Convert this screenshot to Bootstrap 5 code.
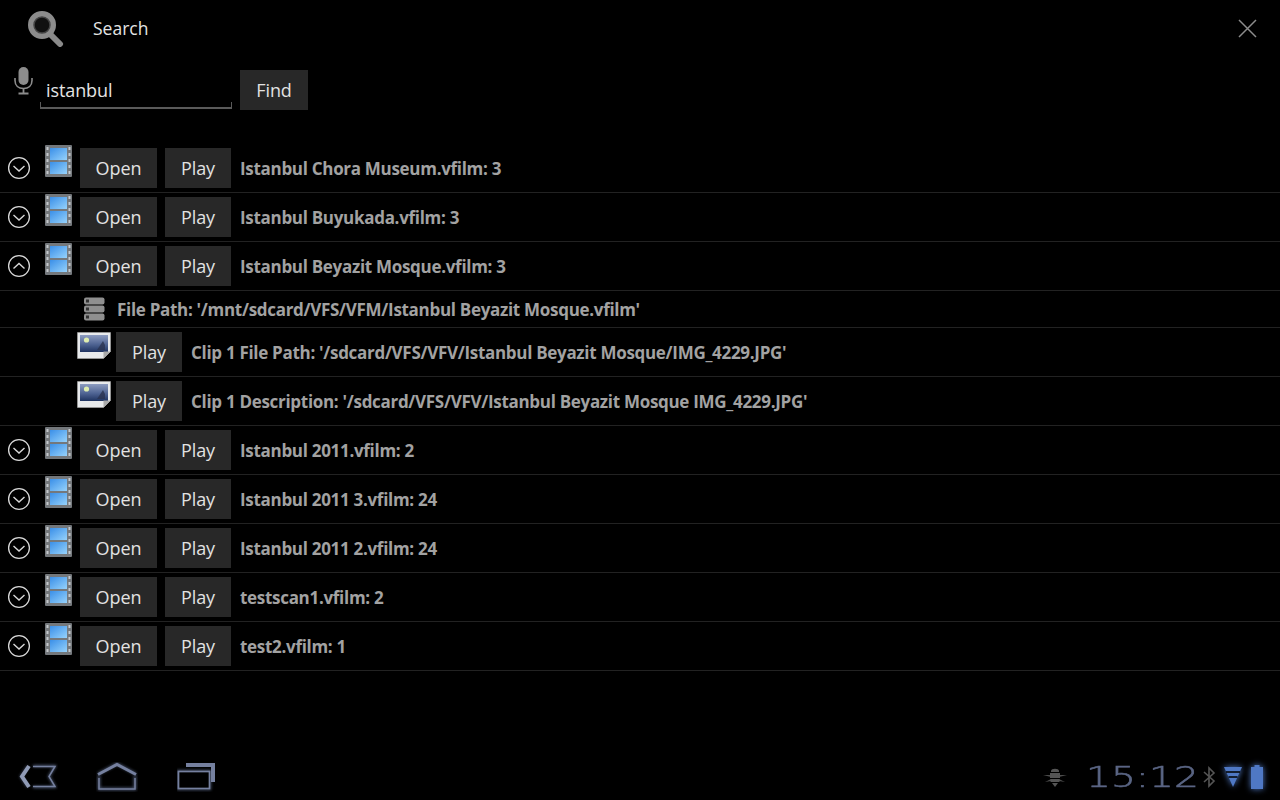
<!DOCTYPE html>
<html lang="en">
<head>
    <meta charset="UTF-8">
    <meta name="viewport" content="width=device-width, initial-scale=1.0">
    <title>Search</title>
    <link href="https://cdn.jsdelivr.net/npm/bootstrap@5.3.0/dist/css/bootstrap.min.css" rel="stylesheet">
    <style>
        html, body { height: 100%; }
        body {
            background: #000;
            color: #a2a2a2;
            font-family: "Open Sans", "Noto Sans", sans-serif;
            overflow: hidden;
        }
        .page-wrap { height: 800px; }
        .top-bar { height: 56px; padding: 0 23px 0 27px; }
        .top-title { color: #e4e4e4; font-size: 17.500px; margin-left: 28px; }
        .search-row { height: 88px; padding: 14px 0 0 14px; }
        .mic-icon { margin-top: -3px; }
        .query-box {
            width: 192px; height: 39px; margin-left: 7px; padding: 2px 5px 0;
            color: #e4e4e4; font-size: 18px; line-height: 37px; letter-spacing: -.1px;
            border: 2px solid #555; border-width: 0 1px 2px; border-image: linear-gradient(to bottom, #000 0 85%, #5a5a5a 85%) 1;
        }
        .dark-btn {
            background: #282828; color: #e2e2e2; border: 0; border-radius: 0;
            height: 40px; padding: 0; font-size: 18px; line-height: 40px; text-align: center; letter-spacing: -.1px;
        }
        .find-btn { width: 68px; margin-left: 8px; }
        .open-btn { width: 77px; }
        .play-btn { width: 66px; }
        .result-row { height: 49px; border-bottom: 1px solid #222; padding-top: 4px; }
        .result-row.path-row { height: 37px; padding-top: 0; }
        .toggle-icon { margin: 8px 0 0 7px; }
        .film-icon { margin: -3px 8px 0 14px; }
        .clip-icon { margin: 0 5px 0 77px; }
        .db-icon { margin-left: 83px; }
        .row-text { font-weight: 700; font-size: 17px; letter-spacing: -.3px; line-height: 42px; margin-left: 9px; white-space: nowrap; }
        .path-row .row-text { line-height: 38px; margin-left: 12px; padding-top: 2px; }
        .sys-bar { height: 50px; margin-top: auto; padding-top: 4px; }
        .clock-text {
            color: #5a6584; font-family: "DejaVu Sans", sans-serif; font-weight: 200;
            font-size: 29px; line-height: 44px; width: 108px; white-space: nowrap;
            -webkit-text-stroke: .6px #5a6584;
            transform: scaleX(1.35); transform-origin: left center;
        }
        .glow-icon { filter: drop-shadow(0 0 3px #4f78c4); }
    </style>
</head>
<body>
    <svg width="0" height="0" class="d-block position-absolute">
        <defs>
            <linearGradient id="frameBlue" x1="0" y1="0" x2="1" y2="1">
                <stop offset="0" stop-color="#3a8fe8"/><stop offset="1" stop-color="#96d2fb"/>
            </linearGradient>
            <linearGradient id="picSky" x1="0" y1="0" x2="0" y2="1">
                <stop offset="0" stop-color="#8d9cc0"/><stop offset=".55" stop-color="#4f6493"/><stop offset="1" stop-color="#1f3360"/>
            </linearGradient>
            <filter id="softGlow" x="-30%" y="-30%" width="160%" height="160%">
                <feGaussianBlur stdDeviation="1.600"/>
            </filter>
            <symbol id="film" viewBox="0 0 27 32">
                <rect width="27" height="32" rx="1" fill="#74787c"/>
                <rect x="5" y="3" width="17" height="12" fill="url(#frameBlue)"/>
                <rect x="5" y="17" width="17" height="12" fill="url(#frameBlue)"/>
                <g fill="#c4c8cc">
                    <rect x="1.500" y="2" width="2" height="3"/><rect x="1.500" y="8" width="2" height="3"/><rect x="1.500" y="14" width="2" height="3"/><rect x="1.500" y="20" width="2" height="3"/><rect x="1.500" y="26" width="2" height="3"/>
                    <rect x="23.500" y="2" width="2" height="3"/><rect x="23.500" y="8" width="2" height="3"/><rect x="23.500" y="14" width="2" height="3"/><rect x="23.500" y="20" width="2" height="3"/><rect x="23.500" y="26" width="2" height="3"/>
                </g>
            </symbol>
            <symbol id="chevDown" viewBox="0 0 24 24">
                <circle cx="12" cy="12" r="10.400" fill="none" stroke="#d8d8d8" stroke-width="1.300"/>
                <path d="M6.500 10l5.500 5 5.500-5" fill="none" stroke="#d8d8d8" stroke-width="1.400"/>
            </symbol>
            <symbol id="chevUp" viewBox="0 0 24 24">
                <circle cx="12" cy="12" r="10.400" fill="none" stroke="#d8d8d8" stroke-width="1.300"/>
                <path d="M6.500 14.500l5.500-5 5.500 5" fill="none" stroke="#d8d8d8" stroke-width="1.400"/>
            </symbol>
            <symbol id="clipPic" viewBox="0 0 34 27">
                <path d="M.5 .5h33v19l-7 7H.5z" fill="#e8eaec" stroke="#aaa" stroke-width=".6"/>
                <rect x="3" y="3" width="28" height="17" fill="url(#picSky)"/>
                <circle cx="9.500" cy="8" r="2.600" fill="#dfeeb0"/>
                <path d="M20 18l4-6 2-3 2 4v5z" fill="#2b3350" opacity=".8"/>
                <path d="M26.500 26.500l7-7h-7z" fill="#aaa"/>
            </symbol>
            <symbol id="dbStack" viewBox="0 0 22 24">
                <rect x="1" y="0.500" width="20.500" height="7" rx="2" fill="#8f8f8f"/>
                <rect x="1" y="8.500" width="20.500" height="7" rx="2" fill="#8f8f8f"/>
                <rect x="1" y="16.500" width="20.500" height="7" rx="2" fill="#8f8f8f"/>
                <rect x="3" y="2.500" width="3" height="3" fill="#333"/><rect x="3" y="10.500" width="3" height="3" fill="#333"/><rect x="3" y="18.500" width="3" height="3" fill="#333"/>
            </symbol>
        </defs>
    </svg>

    <div class="page-wrap d-flex flex-column">
        <div class="top-bar d-flex align-items-center">
            <svg width="38" height="37" viewBox="0 0 38 37">
                <path d="M23 24l10 10" stroke="#8a8a8a" stroke-width="6" stroke-linecap="round"/>
                <circle cx="15" cy="15" r="11" fill="#111" stroke="#8c8c8c" stroke-width="6"/>
                <circle cx="15" cy="15" r="8" fill="none" stroke="#444" stroke-width="1.500"/>
            </svg>
            <span class="top-title">Search</span>
            <svg class="ms-auto" width="19" height="19" viewBox="0 0 19 19">
                <path d="M1 1l17 17M18 1L1 18" stroke="#8c8c8c" stroke-width="1.500"/>
            </svg>
        </div>

        <div class="search-row d-flex align-items-start">
            <svg class="mic-icon" width="19" height="28" viewBox="0 0 19 28">
                <rect x="4.500" y="0" width="10" height="18" rx="5" fill="#8c8c8c"/>
                <path d="M1 11v2.500c0 5 3.500 8 8.500 8s8.500-3 8.500-8V11" fill="none" stroke="#8c8c8c" stroke-width="1.600"/>
                <path d="M9.500 21v5M4.500 26.500h10" stroke="#8c8c8c" stroke-width="1.800"/>
            </svg>
            <div class="query-box">istanbul</div>
            <button type="button" class="dark-btn find-btn">Find</button>
        </div>

        <div id="resultList"></div>

        <div class="sys-bar d-flex align-items-center">
            <svg class="ms-3" width="42" height="30" viewBox="0 0 42 30">
                <g fill="none" stroke="#6a7a9e" stroke-width="2" filter="url(#softGlow)" opacity=".8">
                    <path d="M17 4H39L33 14.500l6 10.500H17"/><path d="M12 4L5 14.500 12 25"/>
                </g>
                <path d="M17 4.500H39L33 14.500l6 10H17" fill="none" stroke="#75809f" stroke-width="1.500"/>
                <path d="M13 4L6 14.500 13 25" fill="none" stroke="#8f9ab5" stroke-width="4"/>
            </svg>
            <svg style="margin-left:38px" width="42" height="30" viewBox="0 0 42 30">
                <path d="M2 12L21 2l19 10M3 14v13h36V14" fill="none" stroke="#6a7a9e" stroke-width="2.500" filter="url(#softGlow)" opacity=".8"/>
                <path d="M2 12.500L21 2.500l19 10" fill="none" stroke="#75809f" stroke-width="3"/>
                <path d="M3 16v11h36V16" fill="none" stroke="#75809f" stroke-width="1.500"/>
            </svg>
            <svg style="margin-left:39px" width="40" height="30" viewBox="0 0 40 30">
                <g filter="url(#softGlow)" opacity=".8" fill="none" stroke="#6a7a9e" stroke-width="2"><rect x="1" y="9" width="32" height="18"/></g>
                <path d="M9 3h27v17" fill="none" stroke="#75809f" stroke-width="4"/>
                <rect x="1.500" y="9.500" width="31" height="17" fill="#000" stroke="#75809f" stroke-width="1.700"/>
            </svg>
            <div class="ms-auto d-flex align-items-center gap-2 pe-3">
                <svg width="24" height="22" viewBox="0 0 24 22">
                    <path d="M0 9l8 2v-2zM24 9l-8 2v-2zM2 16l6-3v2zM22 16l-6-3v2z" fill="#4c4c4c"/>
                    <path d="M8 5c0-3 8-3 8 0v1H8z" fill="#555"/>
                    <path d="M7 7h10v5H7zM7.500 13h9v3h-9zM9 17h6l-3 4z" fill="#555"/>
                </svg>
                <span class="clock-text d-inline-block" style="margin:0 0 0 11px">15:12</span>
                <svg width="14" height="22" viewBox="0 0 14 22">
                    <path d="M2 6l10 9-5 5V2l5 5-10 9" fill="none" stroke="#555" stroke-width="1.600"/>
                </svg>
                <svg class="glow-icon" width="18" height="22" viewBox="0 0 18 22">
                    <path d="M0 1h18l-9 20z" fill="#4f78c4"/>
                    <path d="M2 6h14M4.500 11h9" stroke="#000" stroke-width="1.500"/>
                </svg>
                <svg class="glow-icon" width="14" height="24" viewBox="0 0 14 24">
                    <path d="M4.500 0h5v2h3.500v22H1V2h3.500z" fill="#4f78c4"/>
                </svg>
            </div>
        </div>
    </div>

    <script src="https://cdn.jsdelivr.net/npm/bootstrap@5.3.0/dist/js/bootstrap.bundle.min.js"></script>
    <script>
        const rows = [
            { name: "Istanbul Chora Museum.vfilm: 3" },
            { name: "Istanbul Buyukada.vfilm: 3" },
            { name: "Istanbul Beyazit Mosque.vfilm: 3", open: true },
            { path: "File Path: '/mnt/sdcard/VFS/VFM/Istanbul Beyazit Mosque.vfilm'" },
            { clip: "Clip 1 File Path: '/sdcard/VFS/VFV/Istanbul Beyazit Mosque/IMG_4229.JPG'" },
            { clip: "Clip 1 Description: '/sdcard/VFS/VFV/Istanbul Beyazit Mosque IMG_4229.JPG'" },
            { name: "Istanbul 2011.vfilm: 2" },
            { name: "Istanbul 2011 3.vfilm: 24" },
            { name: "Istanbul 2011 2.vfilm: 24" },
            { name: "testscan1.vfilm: 2" },
            { name: "test2.vfilm: 1" }
        ];
        let html = "";
        rows.forEach(function (r) {
            if (r.path) {
                html += `<div class="result-row path-row d-flex align-items-center">
                    <svg class="db-icon" width="22" height="24"><use href="#dbStack"/></svg>
                    <span class="row-text">${r.path}</span></div>`;
            } else if (r.clip) {
                html += `<div class="result-row d-flex align-items-start">
                    <svg class="clip-icon" width="34" height="27"><use href="#clipPic"/></svg>
                    <button type="button" class="dark-btn play-btn">Play</button>
                    <span class="row-text">${r.clip}</span></div>`;
            } else {
                html += `<div class="result-row d-flex align-items-start">
                    <svg class="toggle-icon" width="24" height="24"><use href="${r.open ? "#chevUp" : "#chevDown"}"/></svg>
                    <svg class="film-icon" width="27" height="32"><use href="#film"/></svg>
                    <button type="button" class="dark-btn open-btn">Open</button>
                    <button type="button" class="dark-btn play-btn ms-2">Play</button>
                    <span class="row-text">${r.name}</span></div>`;
            }
        });
        document.getElementById("resultList").innerHTML = html;
    </script>
</body>
</html>
